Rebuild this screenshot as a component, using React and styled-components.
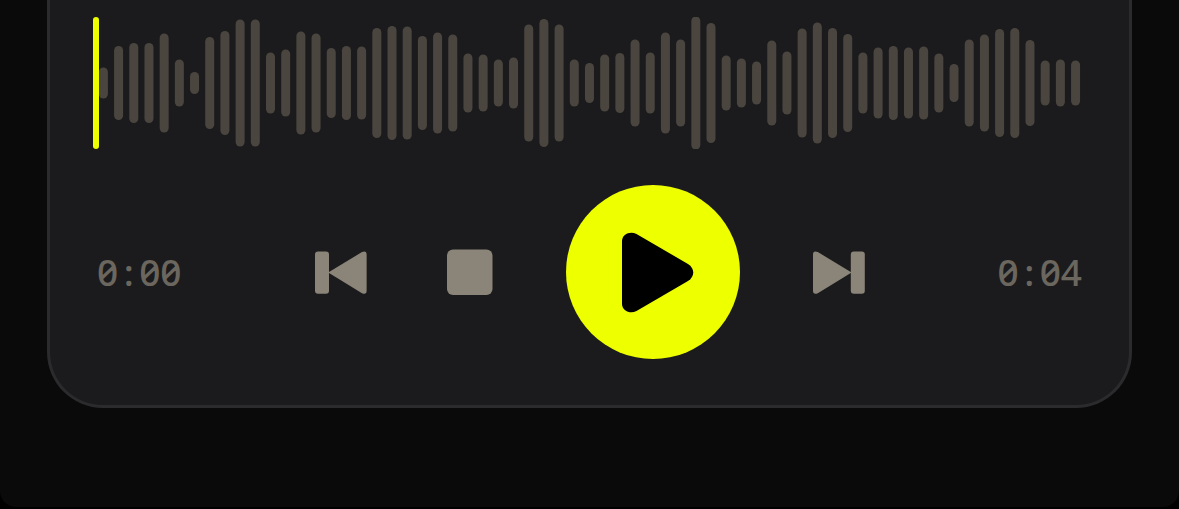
import React from "react";
import styled, { createGlobalStyle } from "styled-components";

const GlobalStyle = createGlobalStyle`
  * {
    box-sizing: border-box;
  }
  body {
    margin: 0;
    background: #000000;
  }
`;

const Page = styled.main`
  min-height: calc(100vh - 2px);
  padding: 0 47px 99px;
  background: #0a0a0a;
  border-radius: 0 0 16px 16px;
`;

const Card = styled.section`
  display: flex;
  flex-direction: column;
  gap: 36px;
  padding: 17px 43px 46px;
  background: #1b1b1d;
  border: 3px solid #2b2b2e;
  border-top: none;
  border-radius: 0 0 56px 56px;
`;

const Waveform = styled.svg`
  display: block;
  width: 100%;
  height: auto;
`;

const PlayerRow = styled.div`
  display: flex;
  align-items: center;
  justify-content: space-between;
  padding: 0 4px;
`;

const Controls = styled.div`
  display: flex;
  align-items: center;
  gap: 66px;
`;

const Time = styled.time`
  font-family: "Noto Sans", sans-serif;
  font-size: 37px;
  line-height: 44px;
  font-weight: 500;
  font-feature-settings: "tnum" 1, "zero" 1;
  color: #6b675f;
`;

// the colon takes a full digit's width, like in a monospaced clock
const Colon = styled.span`
  display: inline-block;
  width: 21px;
  text-align: center;
`;

const IconButton = styled.button`
  display: flex;
  align-items: center;
  justify-content: center;
  width: ${({ $width }) => $width}px;
  height: 66px;
  padding: 0;
  border: none;
  background: transparent;
  color: #8b8478;
  cursor: pointer;
`;

const PlayButton = styled(IconButton)`
  height: 174px;
  border-radius: 50%;
  background: #eeff00;
  color: #000000;
`;

const peaks = [
  31, 74, 80, 80, 99, 47, 22, 92, 104, 127, 127, 61, 67, 103, 99, 70, 74, 73,
  110, 114, 113, 94, 101, 97, 59, 57, 47, 51, 117, 128, 117, 47, 40, 57, 60,
  87, 61, 101, 87, 133, 120, 55, 49, 43, 85, 63, 109, 121, 110, 98, 61, 71,
  74, 71, 73, 59, 38, 87, 97, 108, 110, 86, 45, 47, 45,
];

const BAR_WIDTH = 9;
const BAR_STEP = 15.19;

const PreviousIcon = () => (
  <svg width="52" height="44" viewBox="0 0 52 44" fill="currentColor" aria-hidden="true">
    <rect x="0" y="1.4" width="14" height="42.4" rx="3" />
    <path d="M13.2 22.6 L47 2 Q51.6 0 51.6 4.6 V40.6 Q51.6 45.2 47 43.2 Z" />
  </svg>
);

const NextIcon = () => (
  <svg width="52" height="44" viewBox="0 0 52 44" fill="currentColor" aria-hidden="true">
    <rect x="37.8" y="1.4" width="14" height="42.4" rx="3" />
    <path d="M38.6 22.6 L4.8 2 Q0 0 0 4.6 V40.6 Q0 45.2 4.8 43.2 Z" />
  </svg>
);

const StopIcon = () => (
  <svg width="46" height="46" viewBox="0 0 46 46" fill="currentColor" aria-hidden="true">
    <rect y="0.5" width="45.5" height="45.5" rx="6" />
  </svg>
);

const PlayIcon = () => (
  <svg width="174" height="174" viewBox="0 0 174 174" fill="currentColor" aria-hidden="true">
    <path d="M56 56 C56 49.5 64 45.5 70.5 49 L122 79 C129 83.5 129 91.5 122 96 L70.5 126 C64 129.5 56 125.5 56 119 Z" />
  </svg>
);

const App = () => {
  return (
    <>
      <GlobalStyle />
      <Page>
        <Card aria-label="Audio player">
          <Waveform viewBox="0 0 993 132" role="img" aria-label="Waveform">
            {peaks.map((peak, index) => (
              <rect
                key={index}
                x={5.9 + index * BAR_STEP}
                y={66 - peak / 2}
                width={BAR_WIDTH}
                height={peak}
                rx={BAR_WIDTH / 2}
                fill="#4a463f"
              />
            ))}
            <rect width="6" height="132" rx="3" fill="#eeff00" />
          </Waveform>
          <PlayerRow>
            <Time>
              0<Colon>:</Colon>00
            </Time>
            <Controls>
              <IconButton type="button" aria-label="Previous" $width={66}>
                <PreviousIcon />
              </IconButton>
              <IconButton type="button" aria-label="Stop" $width={60}>
                <StopIcon />
              </IconButton>
              <PlayButton type="button" aria-label="Play" $width={174}>
                <PlayIcon />
              </PlayButton>
              <IconButton type="button" aria-label="Next" $width={66}>
                <NextIcon />
              </IconButton>
            </Controls>
            <Time>
              0<Colon>:</Colon>04
            </Time>
          </PlayerRow>
        </Card>
      </Page>
    </>
  );
};

export default App;
